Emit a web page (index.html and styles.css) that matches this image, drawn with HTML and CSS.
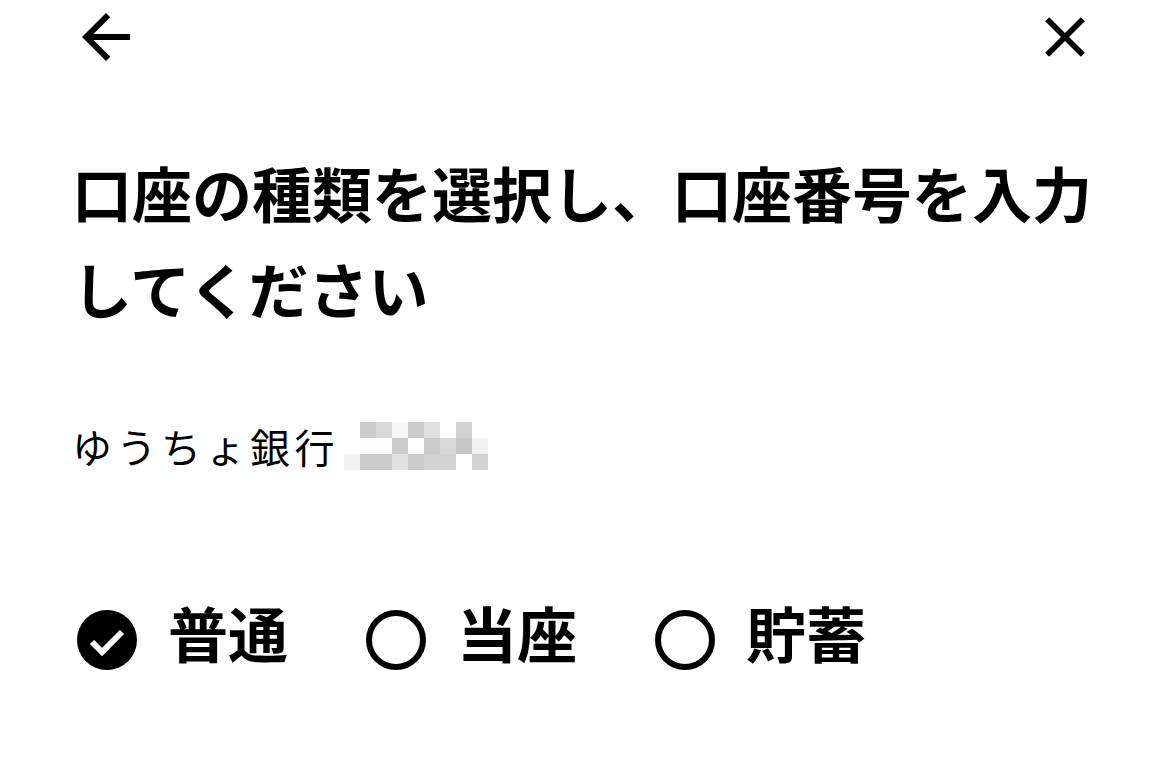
FILE: index.html
```html
<!DOCTYPE html>
<html lang="ja">
<head>
  <meta charset="UTF-8">
  <title>口座の種類を選択</title>
  <link rel="stylesheet" href="styles.css">
</head>
<body>

<header class="topbar">
  <button class="icon-btn" aria-label="戻る">
    <svg width="72" height="72" viewBox="0 0 24 24"><path d="M20 11H7.83l5.59-5.59L12 4l-8 8 8 8 1.41-1.41L7.83 13H20v-2z"/></svg>
  </button>
  <button class="icon-btn" aria-label="閉じる">
    <svg width="68" height="68" viewBox="0 0 24 24"><path d="M19 6.41L17.59 5 12 10.59 6.41 5 5 6.41 10.59 12 5 17.59 6.41 19 12 13.41 17.59 19 19 17.59 13.41 12z"/></svg>
  </button>
</header>

<main class="content">
  <h1 class="title">口座の種類を選択し、口座番号を入力してください</h1>

  <div class="bank">
    <span class="bank-name">ゆうちょ銀行</span>
    <div class="mosaic">
      <i class="w"></i><i class="g1"></i><i class="g3"></i><i class="g6"></i><i class="g1"></i><i class="g4"></i><i class="w"></i><i class="g2"></i><i class="w"></i>
      <i class="w"></i><i class="g7"></i><i class="g7"></i><i class="g1"></i><i class="w"></i><i class="g1"></i><i class="g3"></i><i class="g0"></i><i class="g5"></i>
      <i class="g5"></i><i class="g1"></i><i class="g1"></i><i class="g4"></i><i class="g1"></i><i class="g2"></i><i class="g2"></i><i class="w"></i><i class="g2"></i>
    </div>
  </div>

  <div class="types">
    <label class="type">
      <svg width="72" height="72" viewBox="0 0 72 72"><circle cx="36" cy="36" r="30"/><polyline points="21,38 31,48 51,28" fill="none" stroke="#fff" stroke-width="6"/></svg>
      <span>普通</span>
    </label>
    <label class="type">
      <svg width="72" height="72" viewBox="0 0 72 72"><circle cx="36" cy="36" r="27" fill="none" stroke="#000" stroke-width="6"/></svg>
      <span>当座</span>
    </label>
    <label class="type">
      <svg width="72" height="72" viewBox="0 0 72 72"><circle cx="36" cy="36" r="27" fill="none" stroke="#000" stroke-width="6"/></svg>
      <span>貯蓄</span>
    </label>
  </div>
</main>

</body>
</html>
```

FILE: styles.css
```css
body {
  margin: 0;
  background: #fff;
  color: #000;
  font-family: "Noto Sans CJK JP", "Noto Sans", sans-serif;
}
.topbar {
  height: 74px;
  padding: 0 71px 0 70px;
  display: flex;
  justify-content: space-between;
  align-items: center;
}
.icon-btn {
  border: none;
  background: none;
  padding: 0;
  display: flex;
}
.content {
  padding: 0 72px;
}
.title {
  margin: 70px 0 0;
  font-size: 60px;
  font-weight: 700;
  line-height: 96px;
}
.bank {
  margin-top: 82px;
  display: flex;
  align-items: center;
  gap: 5px;
}
.bank-name {
  font-size: 40px;
  letter-spacing: 4.5px;
  line-height: 56px;
}
.mosaic {
  display: grid;
  grid-template-columns: repeat(9, 16px);
  grid-auto-rows: 16px;
}
.mosaic .w { background: #fff; }
.mosaic .g0 { background: #c6c6c6; }
.mosaic .g1 { background: #cbcbcb; }
.mosaic .g2 { background: #d2d2d2; }
.mosaic .g3 { background: #d9d9d9; }
.mosaic .g4 { background: #e1e1e1; }
.mosaic .g5 { background: #f2f2f2; }
.mosaic .g6 { background: #f6f6f6; }
.mosaic .g7 { background: #fdfdfd; }
.types {
  margin-top: 122px;
  display: flex;
  gap: 73px;
}
.type {
  display: flex;
  align-items: center;
  gap: 25px;
  margin-left: -1px;
}
.type span {
  font-size: 60px;
  font-weight: 700;
  line-height: 72px;
  padding-bottom: 16px;
}
```
